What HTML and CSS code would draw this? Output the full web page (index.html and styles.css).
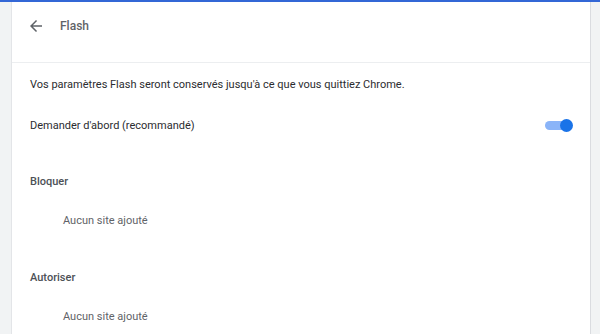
FILE: index.html
```html
<!DOCTYPE html>
<html lang="fr">
  <head>
    <meta charset="UTF-8" />
    <meta name="viewport" content="width=device-width, initial-scale=1.0" />
    <title>Flash</title>
    <link rel="stylesheet" href="styles.css">
  </head>
  <body>
    <div class="topbar"></div>
    <div class="page">
      <div class="card">
        <div class="header">
          <button class="back" aria-label="Retour">
            <svg width="18" height="18" viewBox="0 0 24 24">
              <path d="M20 11H7.83l5.59-5.59L12 4l-8 8 8 8 1.41-1.41L7.83 13H20v-2z" fill="#5f6368"/>
            </svg>
          </button>
          <span class="title">Flash</span>
        </div>

        <div class="row first">Vos paramètres Flash seront conservés jusqu'à ce que vous quittiez Chrome.</div>
        <div class="row toggle-row">
          <span>Demander d'abord (recommandé)</span>
          <span class="toggle"><span class="knob"></span></span>
        </div>

        <div class="section">Bloquer</div>
        <div class="empty">Aucun site ajouté</div>

        <div class="section later">Autoriser</div>
        <div class="empty">Aucun site ajouté</div>
      </div>
    </div>
  </body>
</html>
```

FILE: styles.css
```css
html, body {
  margin: 0;
  padding: 0;
  height: 100%;
  overflow: hidden;
}
body {
  background: #f1f3f4;
  font-family: Roboto, "Liberation Sans", sans-serif;
  font-size: 11px;
  color: #2b2c2f;
}
.topbar {
  height: 2px;
  background: #3367d6;
}
.page {
  display: flex;
  padding-left: 11px;
  height: 332px;
}
.card {
  width: 578px;
  background: #ffffff;
  border-left: 1px solid #e3e5e8;
  border-right: 1px solid #dadce0;
}
.header {
  display: flex;
  align-items: center;
  height: 48px;
  padding-left: 15px;
  padding-bottom: 12px;
  border-bottom: 1px solid #eceef0;
}
.back {
  border: none;
  background: none;
  padding: 0;
  width: 18px;
  height: 18px;
  display: flex;
  cursor: pointer;
}
.title {
  margin-left: 15px;
  font-size: 12px;
  font-weight: 500;
  color: #5f6368;
}
.row {
  display: flex;
  align-items: center;
  padding: 0 17px 0 18px;
}
.first {
  height: 42px;
}
.toggle-row {
  height: 40px;
  justify-content: space-between;
}
.toggle {
  position: relative;
  width: 24px;
  height: 9px;
  border-radius: 5px;
  background: #8ab4f8;
  margin-right: 4px;
}
.knob {
  position: absolute;
  right: -4px;
  top: -2px;
  width: 13px;
  height: 13px;
  border-radius: 50%;
  background: #1a73e8;
}
.section {
  margin-top: 16px;
  height: 40px;
  display: flex;
  align-items: center;
  padding-left: 18px;
  font-weight: 500;
  color: #4d5156;
}
.section.later {
  margin-top: 18px;
}
.empty {
  height: 38px;
  display: flex;
  align-items: center;
  padding-left: 51px;
  color: #5f6368;
}
```
